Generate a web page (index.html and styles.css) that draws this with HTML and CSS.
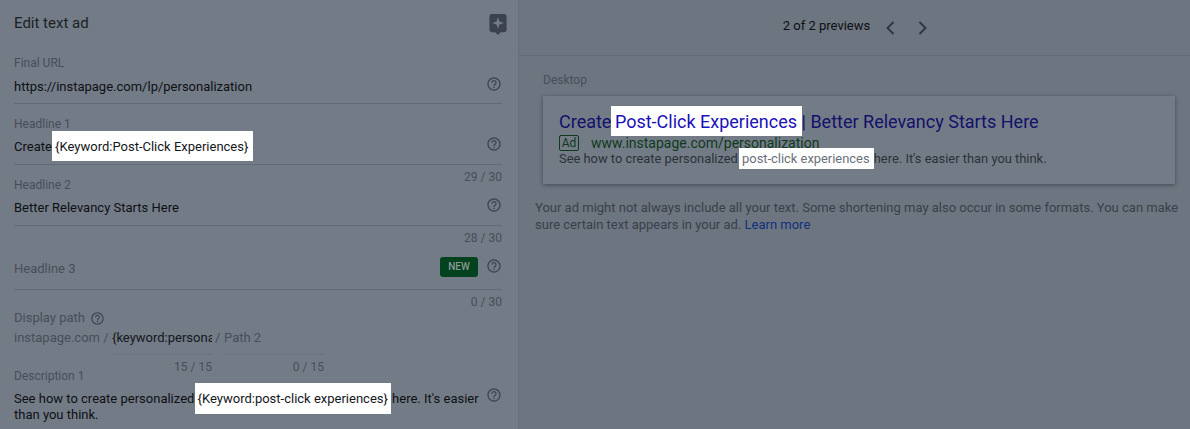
FILE: index.html
```html
<!DOCTYPE html>
<html lang="en">
<head>
<meta charset="utf-8">
<title>Edit text ad</title>
<link rel="stylesheet" href="styles.css">
</head>
<body>
<svg class="defs" width="0" height="0" aria-hidden="true">
  <symbol id="help" viewBox="0 0 24 24"><path d="M11 18h2v-2h-2v2zm1-16C6.48 2 2 6.48 2 12s4.48 10 10 10 10-4.48 10-10S17.52 2 12 2zm0 18c-4.41 0-8-3.59-8-8s3.59-8 8-8 8 3.59 8 8-3.59 8-8 8zm0-14c-2.21 0-4 1.79-4 4h2c0-1.1.9-2 2-2s2 .9 2 2c0 2-3 1.75-3 5h2c0-2.25 3-2.5 3-5 0-2.21-1.79-4-4-4z"/></symbol>
</svg>
<main class="page">
  <section class="editor">
    <header class="editor-head">
      <h1 class="title">Edit text ad</h1>
      <svg class="spark" viewBox="0 0 18 22"><path fill-rule="evenodd" d="M2.500 0h13A2.500 2.500 0 0 1 18 2.500v14a2.500 2.500 0 0 1-2.500 2.500H12l-3 3-3-3H2.500A2.500 2.500 0 0 1 0 16.500v-14A2.500 2.500 0 0 1 2.500 0zM9 3.500 7.400 7.900 3 9.500l4.400 1.600L9 15.500l1.600-4.400L15 9.500l-4.400-1.600z"/></svg>
    </header>

    <div class="field field-url">
      <div class="label">Final URL</div>
      <div class="row"><span class="value">https://instapage.com/lp/personalization</span><svg class="help"><use href="#help"/></svg></div>
    </div>

    <div class="field field-h1">
      <div class="label">Headline 1</div>
      <div class="row"><span class="value">Create <span class="mark">{Keyword:Post-Click Experiences}</span></span><svg class="help"><use href="#help"/></svg></div>
    </div>
    <div class="count">29 / 30</div>

    <div class="field field-h2">
      <div class="label">Headline 2</div>
      <div class="row"><span class="value">Better Relevancy Starts Here</span><svg class="help"><use href="#help"/></svg></div>
    </div>
    <div class="count">28 / 30</div>

    <div class="field field-h3">
      <div class="row row-h3"><span class="label label-big">Headline 3</span><span class="side"><span class="badge">NEW</span><svg class="help"><use href="#help"/></svg></span></div>
    </div>
    <div class="count">0 / 30</div>

    <div class="path">
      <div class="label label-path">Display path <svg class="help help-path"><use href="#help"/></svg></div>
      <div class="path-grid">
        <span class="domain">instapage.com /</span>
        <span class="path-cell path-value">{keyword:personalization}</span>
        <span class="slash">/</span>
        <span class="path-cell path-empty">Path 2</span>
        <span class="path-count path-count-1">15 / 15</span>
        <span class="path-count path-count-2">0 / 15</span>
      </div>
    </div>

    <div class="desc">
      <div class="label">Description 1</div>
      <div class="desc-row">
        <p class="desc-text">See how to create personalized <span class="mark mark-desc">{Keyword:post-click experiences}</span> here. It's easier than you think.</p>
        <svg class="help"><use href="#help"/></svg>
      </div>
    </div>
  </section>

  <section class="preview">
    <header class="pager">
      <span class="pager-text">2 of 2 previews</span>
      <svg class="chev" viewBox="0 0 12 16"><path d="M9.500 2 3.500 8l6 6"/></svg>
      <svg class="chev" viewBox="0 0 12 16"><path d="M2.500 2l6 6-6 6"/></svg>
    </header>
    <div class="preview-body">
      <div class="device">Desktop</div>
      <article class="card">
        <div class="ad-title">Create <span class="mark mark-title">Post-Click Experiences</span> | Better Relevancy Starts Here</div>
        <div class="ad-url"><span class="ad-tag">Ad</span><span>www.instapage.com/personalization</span></div>
        <div class="ad-desc">See how to create personalized <span class="mark mark-ad">post-click experiences</span> here. It's easier than you think.</div>
      </article>
      <p class="note">Your ad might not always include all your text. Some shortening may also occur in some formats. You can make sure certain text appears in your ad. <a class="link" href="#">Learn more</a></p>
    </div>
  </section>
</main>
</body>
</html>
```
FILE: styles.css
```css
* { box-sizing: border-box; }
html, body { margin: 0; height: 100%; overflow: hidden; }
body { font-family: Roboto, "Liberation Sans", sans-serif; background: #6d7580; color: #0e1013; }
.defs { position: absolute; }
.page { display: flex; width: 1190px; height: 429px; }

.editor { width: 519px; height: 429px; padding: 0 16px 0 14px; background: #737b87; border-right: 1px solid #676f7a; overflow: hidden; flex: none; }
.editor-head { display: flex; justify-content: space-between; height: 52px; padding-top: 14px; margin-right: -5px; }
.title { margin: 0; font-size: 15px; font-weight: 400; line-height: 18px; color: #1b1f25; }
.spark { width: 18px; height: 21px; fill: #3b424e; }

.label { font-size: 12px; line-height: 16px; color: #474e59; }
.row { display: flex; justify-content: space-between; align-items: center; }
.value { font-size: 13px; line-height: 18px; white-space: nowrap; }
.help { width: 16px; height: 16px; fill: #3f4651; flex: none; }
.row > .help { margin-top: -6px; }
.field { border-bottom: 1px solid #626a75; }
.field .row { height: 24px; margin-top: 3px; }
.field-url { height: 52px; padding-top: 3px; }
.field-url .row { margin-top: 4px; }
.field-h1 { height: 61px; padding-top: 12px; }
.field-h2 { height: 51px; margin-top: -14px; padding-top: 2px; }
.field-h3 { height: 54px; margin-top: -14px; padding-top: 21px; }
.field .row-h3 { margin-top: 0; align-items: flex-start; }
.label-big { font-size: 13px; line-height: 24px; }
.side { display: flex; gap: 8px; align-items: flex-start; }
.side .help { margin-top: 1px; }
.badge { width: 38px; height: 20px; border-radius: 3px; background: #03421f; color: #8a9a92; font-size: 10px; font-weight: 500; line-height: 20px; text-align: center; }
.count { height: 24px; font-size: 12px; line-height: 24px; text-align: right; color: #474e59; }

.mark { background: #fff; padding: 8px 5px 7px 3px; margin-left: -3px; color: #14171b; }
.mark-desc { padding: 8px 3px; margin-left: -3px; margin-right: -2px; }

.path { margin-top: -4px; }
.label-path { display: flex; align-items: center; gap: 5px; height: 16px; font-size: 13px; }
.help-path { width: 15px; height: 15px; }
.path-grid { display: grid; grid-template-columns: 98px 100px 12px 100px; grid-template-rows: 28px 24px; margin-top: 1px; font-size: 13px; color: #474e59; }
.domain { line-height: 22px; white-space: nowrap; }
.slash { line-height: 22px; padding-left: 3px; }
.path-cell { line-height: 22px; border-bottom: 1px solid #6a727d; overflow: hidden; white-space: nowrap; }
.path-value { color: #14171b; }
.path-count { font-size: 12px; line-height: 24px; text-align: right; grid-row: 2; }
.path-count-1 { grid-column: 2; }
.path-count-2 { grid-column: 4; }

.desc { margin-top: -12px; }
.desc > .label { padding-top: 1px; }
.desc-row { display: flex; justify-content: space-between; align-items: flex-start; margin-top: 3px; }
.desc-text { margin: 4px 0 0; width: 465px; font-size: 13px; line-height: 16px; }

.preview { flex: 1; min-width: 0; }
.pager { display: flex; align-items: center; justify-content: center; height: 56px; padding-left: 12px; border-bottom: 1px solid #626a75; gap: 12px; }
.pager-text { font-size: 13px; color: #0e1013; margin-right: 2px; margin-top: -4px; }
.chev { width: 12px; height: 16px; fill: none; stroke: #2f353e; stroke-width: 1.800; margin-right: 9px; }
.preview-body { padding: 16px 8px 0 16px; }
.device { padding-left: 8px; font-size: 12px; line-height: 16px; color: #474e59; }
.card { margin: 8px 7px 0 8px; height: 88px; padding: 15px 16px 0; background: #737b87; box-shadow: 0 1px 4px rgba(30, 34, 40, .55); }
.ad-title { font-size: 18px; line-height: 22px; color: #12116b; white-space: nowrap; }
.mark-title { color: #1c12b8; padding: 5px 5px 4px 4px; margin-left: -5px; margin-right: -5px; }
.ad-url { display: flex; align-items: center; gap: 12px; height: 18px; margin-top: 1px; font-size: 14px; color: #0e3a1b; }
.ad-tag { width: 20px; height: 16px; border: 1px solid #0e3a1b; border-radius: 2px; font-size: 12px; line-height: 14px; text-align: center; }
.ad-desc { margin-top: -2px; font-size: 12.900px; line-height: 18px; color: #2c3138; }
.mark-ad { color: #6a7079; padding: 3px 4px 3px 3px; margin-left: -2px; margin-right: -3px; }
.note { margin: 15px 0 0; font-size: 13px; line-height: 17px; color: #3a4049; }
.link { color: #10307c; text-decoration: none; }
```
